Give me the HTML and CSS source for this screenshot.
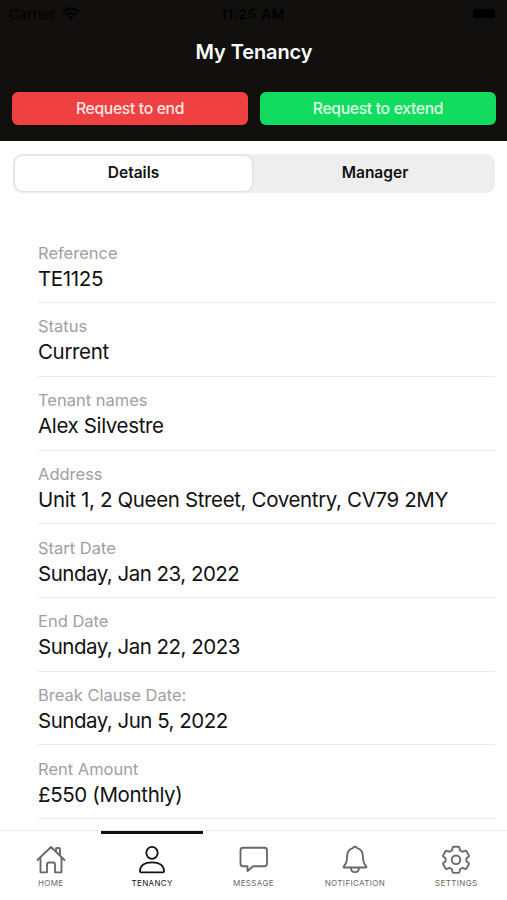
FILE: index.html
```html
<!DOCTYPE html>
<html lang="en">
<head>
<meta charset="utf-8">
<title>My Tenancy</title>
<link rel="stylesheet" href="styles.css">
</head>
<body>
<div class="app">
  <header class="header">
    <div class="status">
      <div class="carrier"><span>Carrier</span>
        <svg width="18" height="13" viewBox="0 0 18 13" fill="none" stroke="currentColor" stroke-width="2.3"><path d="M1 5Q9-2 17 5M4 8Q9 3.800 14 8"/><path d="M6.300 10Q9 7.800 11.700 10L9 12.700z" fill="currentColor" stroke="none"/></svg>
      </div>
      <span class="clock">11:25 AM</span>
      <span class="battery"></span>
    </div>
    <h1 class="title">My Tenancy</h1>
    <div class="actions">
      <button class="btn btn-end">Request to end</button>
      <button class="btn btn-extend">Request to extend</button>
    </div>
  </header>
  <div class="segments">
    <button class="segment segment-active">Details</button>
    <button class="segment">Manager</button>
  </div>
  <main class="details">
    <div class="row"><span class="label">Reference</span><span class="value">TE1125</span></div>
    <div class="row"><span class="label">Status</span><span class="value">Current</span></div>
    <div class="row"><span class="label">Tenant names</span><span class="value">Alex Silvestre</span></div>
    <div class="row"><span class="label">Address</span><span class="value">Unit 1, 2 Queen Street, Coventry, CV79 2MY</span></div>
    <div class="row"><span class="label">Start Date</span><span class="value value-date">Sunday, Jan 23, 2022</span></div>
    <div class="row"><span class="label">End Date</span><span class="value value-date">Sunday, Jan 22, 2023</span></div>
    <div class="row"><span class="label">Break Clause Date:</span><span class="value value-date">Sunday, Jun 5, 2022</span></div>
    <div class="row"><span class="label">Rent Amount</span><span class="value">£550 (Monthly)</span></div>
  </main>
  <nav class="tabs">
    <a class="tab"><svg class="icon" viewBox="0 0 30 30"><path d="M1.500 15 15 2l13.500 13M4.500 13v14.300h6.500V19.500q0-2 2-2h4q2 0 2 2v7.800h6.500V13M20 6.500V4q0-1 1-1h2q1 0 1 1v6.500"/></svg><span>HOME</span></a>
    <a class="tab tab-active"><svg class="icon" viewBox="0 0 30 30"><ellipse cx="15" cy="7.800" rx="5.700" ry="6"/><path d="M3 26.200C3 20.500 8 17.300 15 17.300s12 3.200 12 8.900q0 1.100-1.200 1.100H4.200Q3 27.300 3 26.200z"/></svg><span>TENANCY</span></a>
    <a class="tab"><svg class="icon" viewBox="0 0 30 30"><path d="M4 2.700h21.500q2.500 0 2.500 2.500v13.500q0 2.500-2.500 2.500H14.200L8.500 26v-4.800H4q-2.500 0-2.500-2.500v-13.500Q1.500 2.700 4 2.700z"/></svg><span>MESSAGE</span></a>
    <a class="tab"><svg class="icon" viewBox="0 0 30 30"><path d="M15 1.700q-1.800 0-2.200 1.500C9 4.400 7 8 7 12c0 5-1.200 7.200-3 9q-1.300 1.500.5 1.500h21q1.800 0 .5-1.500c-1.800-1.800-3-4-3-9 0-4-2-7.600-5.800-8.800Q16.800 1.700 15 1.700zM11 22.700c0 5.900 8 5.900 8 0"/></svg><span>NOTIFICATION</span></a>
    <a class="tab"><svg class="icon" viewBox="0 0 30 30"><circle cx="15" cy="14.800" r="4.300"/><path d="M12.500 1.700h5q.9 0 1 .9l.4 2.700 2.700 1.500 2.500-1q.9-.4 1.400.4l2.400 4.200q.4.800-.3 1.300l-2.200 1.600v3l2.200 1.600q.7.500.3 1.300l-2.400 4.200q-.5.800-1.400.4l-2.500-1-2.700 1.500-.4 2.700q-.1.900-1 .9h-5q-.9 0-1-.9l-.4-2.700-2.700-1.500-2.500 1q-.9.400-1.400-.4l-2.400-4.200q-.4-.8.300-1.300l2.200-1.600v-3l-2.200-1.600q-.7-.5-.3-1.300l2.400-4.200q.5-.8 1.400-.4l2.500 1 2.700-1.500.4-2.700q.1-.9 1-.9z"/></svg><span>SETTINGS</span></a>
  </nav>
</div>
</body>
</html>
```
FILE: styles.css
```css
* { box-sizing: border-box; }
body { margin: 0; background: #fff; color: #111; font-family: Inter, "Liberation Sans", sans-serif; }
button { border: 0; margin: 0; padding: 0; font: inherit; }
.app { width: 507px; height: 900px; display: flex; flex-direction: column; overflow: hidden; }
.header { height: 141px; flex: none; background: #12100e; padding: 0 11px 0 12px; }
.status { height: 27px; display: grid; grid-template-columns: 1fr auto 1fr; align-items: center; color: #000; font-size: 13.500px; margin: 0 -1px 0 -3px; }
.carrier { display: flex; align-items: center; gap: 6px; letter-spacing: .35px; }
.clock { font-weight: 600; letter-spacing: .7px; }
.battery { justify-self: end; width: 22px; height: 9px; margin-right: 2px; border-radius: 3px; background: #000; }
.title { height: 51px; line-height: 51px; margin: 0 0 14px; color: #fff; text-align: center; font-size: 20px; font-weight: 600; letter-spacing: -.1px; }
.actions { display: flex; gap: 12px; }
.btn { flex: 1; height: 33px; border-radius: 6px; font-size: 15.700px; font-weight: 500; letter-spacing: -.32px; }
.btn-end { background: #f04142; color: #ffe6e3; }
.btn-extend { background: #12dc60; color: #dfffe5; }
.segments { flex: none; height: 39px; margin: 13px 12px 0 13px; padding: 2px; display: flex; border-radius: 9px; background: #eee; }
.segment { flex: 1; padding: 0 0 2px 5px; border-radius: 8px; background: none; color: #111; font-size: 15.500px; font-weight: 600; }
.segment-active { flex: 0 0 237px; padding-left: 0; background: #fff; box-shadow: 0 0 2px 1px #ddd; }
.details { flex: none; height: 637px; padding: 36.500px 12px 0 38px; }
.row { height: 73.700px; padding-top: 13.300px; display: flex; flex-direction: column; border-bottom: 1px solid #e9e9e9; }
.label { font-size: 16.500px; line-height: 21px; letter-spacing: 0; color: #a0a0a0; }
.value { font-size: 20.500px; line-height: 29px; letter-spacing: -.36px; white-space: nowrap; }
.value-date { letter-spacing: -.5px; }
.tabs { flex: none; height: 70px; display: flex; border-top: 1px solid #e8e8e8; background: #fff; }
.tab { flex: 1; display: flex; flex-direction: column; align-items: center; padding: 11px 0 0 0; border-top: 3px solid transparent; color: #686868; font-size: 8px; line-height: 10px; letter-spacing: .36px; }
.tab-active { border-top-color: #111; color: #111; }
.icon { width: 30px; height: 30px; margin-bottom: 3px; fill: none; stroke: currentColor; stroke-width: 1.850; stroke-linecap: round; stroke-linejoin: round; }
```
